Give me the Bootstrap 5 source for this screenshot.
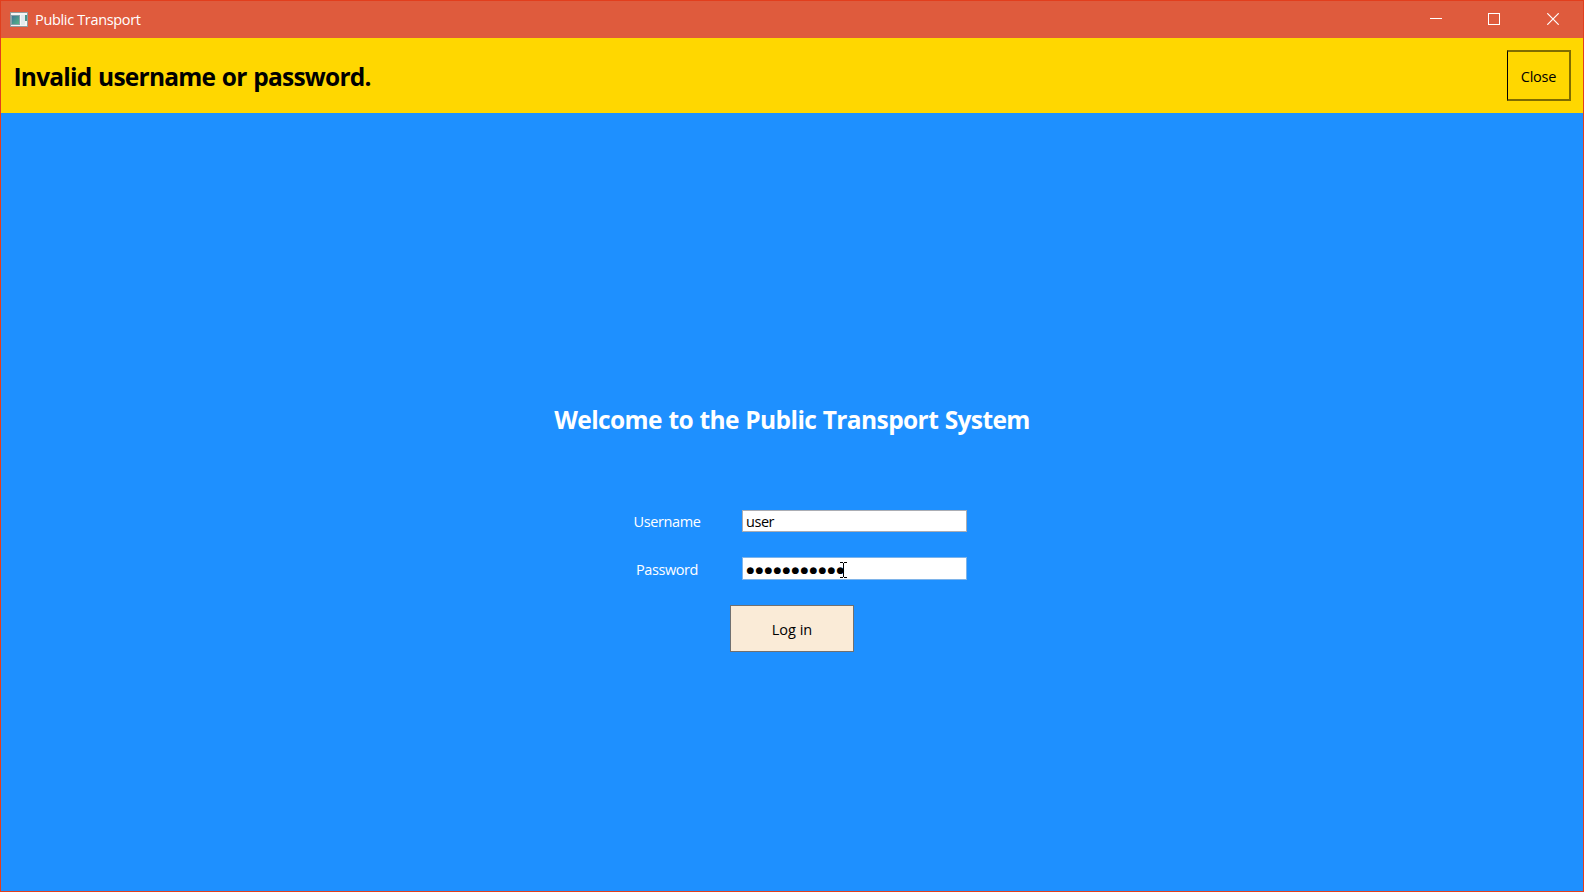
<!DOCTYPE html>
<html lang="en">
<head>
<meta charset="utf-8">
<title>Public Transport</title>
<link href="https://cdn.jsdelivr.net/npm/bootstrap@5.3.0/dist/css/bootstrap.min.css" rel="stylesheet">
<style>
body{font-family:"Open Sans","Noto Sans",sans-serif;font-size:14.5px;line-height:20px;color:#000;overflow:hidden}
.window-frame{height:892px;border:1px solid #e23e1d;background:#1e90ff}
.title-bar{height:37px;background:#df5b3d;color:#fff;padding:0 1px 1px 9px}
.app-name{margin-left:7px;letter-spacing:-.33px;padding-top:1px}
.caption-btn{width:58.5px;height:35px}
.message-bar{height:75px;background:#ffd700;padding:0 12.5px 0 12.5px}
.headline{font-size:24.5px;line-height:34px;font-weight:700;letter-spacing:-.77px;word-spacing:1px;padding-top:2px}
.btn-close-msg{width:64px;height:51px;border:1px solid #000;border-right:2px solid #806c00;border-bottom:2px solid #806c00;border-top:2px solid #806c00;border-radius:0;background:transparent;padding:2px 0 0 1px;font-size:14.5px;letter-spacing:-.2px;color:#000}
.login-form{width:350px;margin-top:288px}
.welcome{color:#fff;white-space:nowrap;letter-spacing:-.6px;word-spacing:.7px}
.user-row{margin-top:73px}
.pass-row{margin-top:25px}
.field-label{width:100px;color:#fff;text-align:center;letter-spacing:-.4px;padding-top:2px}
.field-box{width:225px;height:22px;border:1px solid #abadb3;border-radius:0;padding:0 3px;font-size:14.5px;line-height:20px;letter-spacing:-.45px;color:#000;background:#fff}
.secret{height:23px;border-color:#7eb4ea;font-family:"DejaVu Sans",sans-serif;font-size:9px;letter-spacing:1.15px;padding:2px 0 0 3.5px}
.btn-login{width:124px;height:47px;margin-top:25px;border:1px solid #707070;border-radius:0;background:#faebd7;font-size:14.5px;letter-spacing:0;padding:2px 0 0;color:#000}
.pointer{left:98px;top:5px}
</style>
<script src="https://cdn.jsdelivr.net/npm/bootstrap@5.3.0/dist/js/bootstrap.bundle.min.js"></script>
</head>
<body>
<div class="window-frame d-flex flex-column">
  <header class="title-bar d-flex align-items-center">
    <svg width="18" height="15" viewBox="0 0 18 15"><defs><linearGradient id="pane" x2="1" y2="1"><stop stop-color="#3d7597"/><stop offset="1" stop-color="#55b585"/></linearGradient></defs><rect width="18" height="15" fill="#919b9e"/><rect x="1" y="1" width="16" height="13" fill="#f5f5f5"/><rect x="1" y="3" width="9" height="10" fill="#8aa0a7"/><rect x="2" y="4" width="7" height="8" fill="url(#pane)"/><rect x="11" y="3" width="4" height="10" fill="#e4e9ed"/><rect x="15" y="3" width="2" height="6" fill="#4c9488"/></svg>
    <span class="app-name">Public Transport</span>
    <div class="ms-auto d-flex">
      <div class="caption-btn d-flex align-items-center justify-content-center"><svg width="12" height="12"><path d="M0 5.5H12" stroke="#fff"/></svg></div>
      <div class="caption-btn d-flex align-items-center justify-content-center"><svg width="12" height="12"><rect x=".5" y=".5" width="11" height="11" fill="none" stroke="#fff"/></svg></div>
      <div class="caption-btn d-flex align-items-center justify-content-center"><svg width="12" height="12"><path d="M.3.3 11.7 11.7M11.7.3.3 11.7" stroke="#fff" stroke-width="1.2"/></svg></div>
    </div>
  </header>
  <div class="message-bar d-flex align-items-center justify-content-between">
    <div class="headline">Invalid username or password.</div>
    <button class="btn btn-close-msg">Close</button>
  </div>
  <main class="login-form mx-auto d-flex flex-column align-items-center">
    <h1 class="headline welcome mb-0">Welcome to the Public Transport System</h1>
    <div class="user-row d-flex align-items-center w-100">
      <label class="field-label">Username</label>
      <input class="form-control field-box ms-auto" value="user">
    </div>
    <div class="pass-row d-flex align-items-center w-100">
      <label class="field-label">Password</label>
      <div class="position-relative ms-auto">
        <div class="field-box secret">●●●●●●●●●●●</div>
        <svg class="pointer position-absolute" width="8" height="17"><path d="M0 .5H3M4 .5H7M0 15.5H3M4 15.5H7M3.5 1V15" stroke="#000" fill="none"/></svg>
      </div>
    </div>
    <button class="btn btn-login">Log in</button>
  </main>
</div>
</body>
</html>
